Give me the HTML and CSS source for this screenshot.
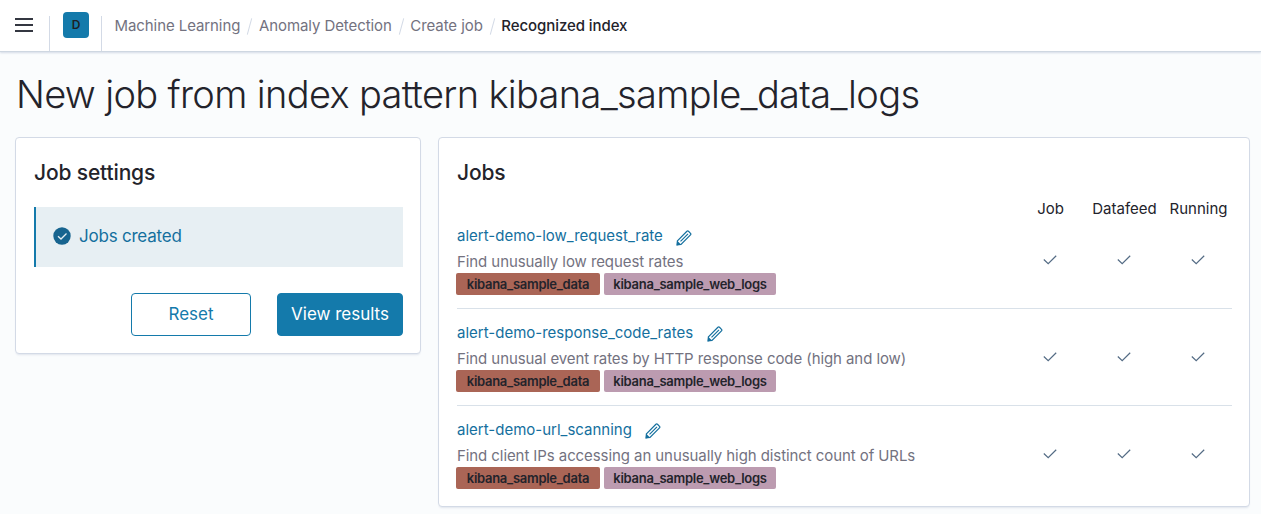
FILE: index.html
```html
<!DOCTYPE html>
<html lang="en">
<head>
<meta charset="utf-8">
<title>Create job - Machine Learning</title>
<link rel="stylesheet" href="styles.css">
</head>
<body>
<svg class="sprite" aria-hidden="true">
  <symbol id="pencil" viewBox="0 0 16 16"><path d="M1.400 10.800 10.900 1.300Q11.700.6 12.500 1.300L14.500 3.300Q15.300 4.100 14.500 4.900L5 14.400 1.100 14.900Z M4.500 11.400 12 3.900" fill="none" stroke="currentColor" stroke-width="1.200"/><path d="M1.300 10.700 5 14.500 .6 15.400Z" fill="currentColor"/></symbol>
  <symbol id="check" viewBox="0 0 14 10"><path d="M.8 4.500 5.200 8.700 13.200 .8" fill="none" stroke="currentColor" stroke-width="1.200"/></symbol>
</svg>
<header class="header">
  <div class="menu"><svg width="18" height="14" viewBox="0 0 18 14"><path d="M0 1h18M0 7h18M0 13h18" stroke="#343741" stroke-width="2"/></svg></div>
  <div class="space"><span class="avatar">D</span></div>
  <nav class="crumbs">
    <a>Machine Learning</a><i></i><a>Anomaly Detection</a><i></i><a>Create job</a><i></i><b>Recognized index</b>
  </nav>
</header>
<main class="page">
  <h1>New job from index pattern kibana_sample_data_logs</h1>
  <div class="columns">
    <section class="panel settings">
      <h2>Job settings</h2>
      <div class="callout">
        <svg width="18" height="18" viewBox="0 0 18 18"><circle cx="9" cy="9" r="8.700" fill="#17648f"/><path d="M5 9.200 8 12 13.500 6.500" fill="none" stroke="#e6eff3" stroke-width="1.300"/></svg>
        <span>Jobs created</span>
      </div>
      <div class="actions"><button class="btn reset">Reset</button><button class="btn fill">View results</button></div>
    </section>
    <section class="panel jobs">
      <h2>Jobs</h2>
      <div class="head"><span>Job</span><span>Datafeed</span><span>Running</span></div>
      <article class="row">
        <div class="info">
          <div class="name"><a>alert-demo-low_request_rate</a><svg class="edit"><use href="#pencil"/></svg></div>
          <p>Find unusually low request rates</p>
          <div class="tags"><span class="tag red">kibana_sample_data</span><span class="tag pink">kibana_sample_web_logs</span></div>
        </div>
        <div class="checks"><svg><use href="#check"/></svg><svg><use href="#check"/></svg><svg><use href="#check"/></svg></div>
      </article>
      <article class="row">
        <div class="info">
          <div class="name"><a>alert-demo-response_code_rates</a><svg class="edit"><use href="#pencil"/></svg></div>
          <p>Find unusual event rates by HTTP response code (high and low)</p>
          <div class="tags"><span class="tag red">kibana_sample_data</span><span class="tag pink">kibana_sample_web_logs</span></div>
        </div>
        <div class="checks"><svg><use href="#check"/></svg><svg><use href="#check"/></svg><svg><use href="#check"/></svg></div>
      </article>
      <article class="row">
        <div class="info">
          <div class="name"><a>alert-demo-url_scanning</a><svg class="edit"><use href="#pencil"/></svg></div>
          <p>Find client IPs accessing an unusually high distinct count of URLs</p>
          <div class="tags"><span class="tag red">kibana_sample_data</span><span class="tag pink">kibana_sample_web_logs</span></div>
        </div>
        <div class="checks"><svg><use href="#check"/></svg><svg><use href="#check"/></svg><svg><use href="#check"/></svg></div>
      </article>
    </section>
  </div>
</main>
</body>
</html>
```
FILE: styles.css
```css
* { box-sizing: border-box; }
body { margin: 0; height: 514px; overflow: hidden; background: #fafcfd; color: #23232b; font-family: Inter, sans-serif; font-size: 15px; }
.sprite { position: absolute; width: 0; height: 0; }
h1, h2, p { margin: 0; }
.header { display: flex; height: 52px; background: #fff; border-bottom: 1px solid #ced7e1; box-shadow: 0 1px 2px #d3dae6; }
.menu { width: 50px; margin-top: 16px; padding: 2px 0 0 15px; border-right: 1px solid #d3dae6; }
.menu svg { display: block; }
.space { width: 52px; margin-top: 16px; border-right: 1px solid #d3dae6; }
.avatar { display: block; width: 26px; height: 26px; margin: -4px 0 0 13px; border-radius: 4px; background: #147aab; color: #1d1e24; text-align: center; font-size: 12px; line-height: 26px; font-weight: 600; }
.crumbs { display: flex; align-items: center; height: 50px; margin-left: 12.500px; color: #73727f; letter-spacing: -.080px; white-space: nowrap; }
.crumbs i { width: 1px; height: 17px; margin: 2px 8.800px 0; background: #d3dae6; transform: rotate(15deg); }
.crumbs b { font-weight: 500; color: #23232b; }
.page { padding: 0 11px 0 15px; }
h1 { height: 85px; padding: 17px 0 0 1px; font-size: 38px; line-height: 50px; font-weight: 300; letter-spacing: -.660px; white-space: nowrap; }
.columns { display: flex; align-items: flex-start; gap: 17px; }
.panel { background: #fff; border: 1px solid #d3dae6; border-radius: 4px; box-shadow: 0 2px 2px -1px #d3dae6aa; }
.settings { width: 406px; height: 217px; padding: 20px 17px 0 18px; }
h2 { font-size: 21px; line-height: 30px; font-weight: 500; letter-spacing: -.150px; }
.callout { display: flex; align-items: center; gap: 8.500px; height: 60px; margin-top: 19px; padding-left: 16.500px; border-left: 2px solid #147aab; background: #e7eff3; color: #146f9e; font-size: 17px; letter-spacing: -.220px; }
.callout span { margin-top: -2px; }
.callout svg { margin-top: -3px; }
.actions { display: flex; justify-content: flex-end; gap: 26px; margin-top: 26px; }
.btn { height: 43px; padding: 0 0 2px; border: 1px solid #147aab; border-radius: 4px; background: #fff; color: #147aab; font: 400 17px Inter, sans-serif; }
.reset { width: 120px; }
.fill { width: 126px; background: #147aab; color: #fff; }
.jobs { flex: 1; height: 370px; padding: 20px 17px 0 18px; }
.head, .checks { display: grid; grid-template-columns: repeat(3, 74px); justify-content: end; text-align: center; }
.head { height: 26px; padding-top: 11px; line-height: 20px; margin-right: -3.500px; white-space: nowrap; }
.head span { display: flex; justify-content: center; }
.row { display: flex; justify-content: space-between; height: 97px; padding-top: 10.500px; border-bottom: 1px solid #d9e1e9; }
.head + .row { height: 95px; padding-top: 9px; }
.row:last-child { border: 0; }
.name { display: flex; align-items: center; height: 25px; color: #146f9e; }
.name a, p { white-space: nowrap; }
.edit { width: 16px; height: 16px; margin: 4px 0 0 13.500px; }
p { height: 25px; line-height: 27px; color: #73727f; letter-spacing: -.080px; }
.tags { display: flex; gap: 4px; margin-left: -1px; }
.tag { display: flex; align-items: center; justify-content: center; height: 22px; border-radius: 2px; font-size: 13px; font-weight: 600; letter-spacing: -.270px; white-space: nowrap; }
.red { width: 144px; background: #aa6556; }
.pink { width: 172px; background: #bc9bb0; }
.checks { margin-right: -3px; color: #536b84; }
.checks svg { width: 14px; height: 10px; margin: 32px auto 0; }
```
